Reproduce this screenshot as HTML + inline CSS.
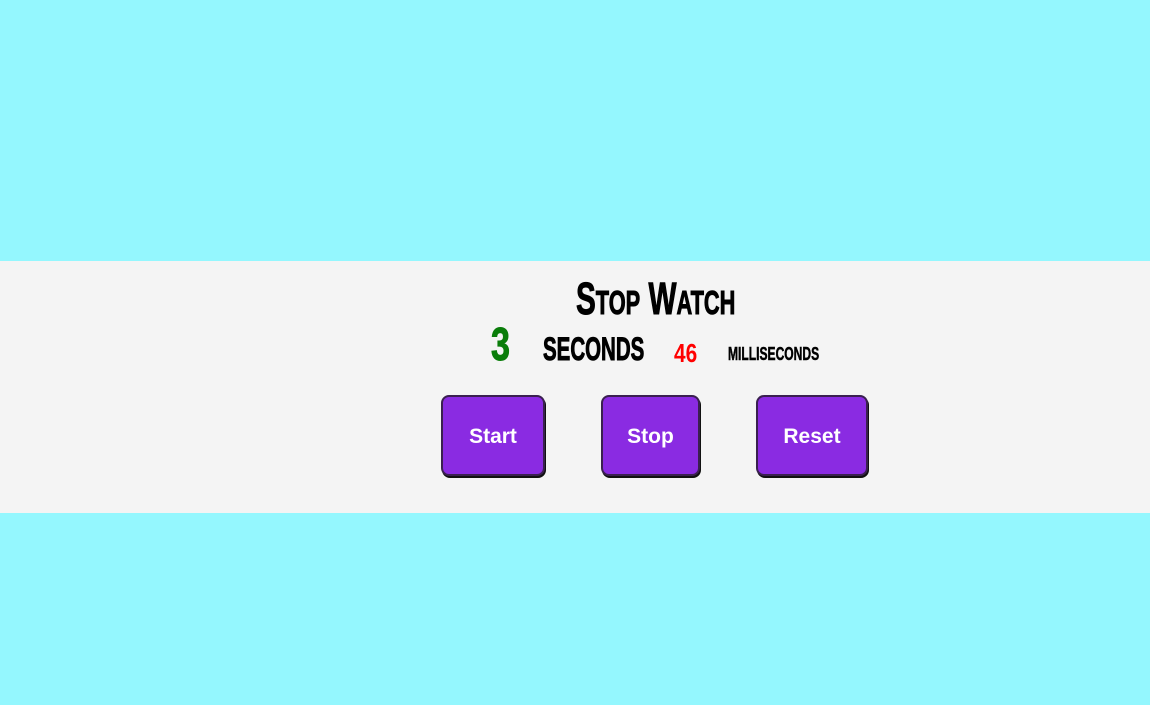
<!DOCTYPE html>
<html><head><style>
body{margin:0;width:1150px;height:705px;background:#94f7fe;position:relative;overflow:hidden;font-family:"Liberation Sans Narrow","Liberation Sans",sans-serif;font-weight:bold}
.band{position:absolute;left:0;top:261px;width:1150px;height:252px;background:#f4f4f4}
.t{position:absolute;line-height:1;white-space:nowrap;transform-origin:0 0}
.b{position:absolute;top:395px;height:81px;box-sizing:border-box;padding-top:2px;background:#8a2be2;border:2px solid #3a2050;border-radius:8px;box-shadow:1px 2px 0 #111;color:#fff;font-family:"Liberation Sans",sans-serif;font-weight:bold;font-size:21px;display:flex;align-items:center;justify-content:center}
</style></head><body>
<div class="band"></div>
<div class="t" style="left:576px;top:276px;font-size:45px;transform:scaleX(.66);-webkit-text-stroke:1px #000">S<span style="font-size:33px">TOP</span> W<span style="font-size:33px">ATCH</span></div>
<div class="t" style="left:491px;top:321px;font-size:46px;color:#0a7d0a;transform:scaleX(.74);-webkit-text-stroke:1px #0a7d0a">3</div>
<div class="t" style="left:543px;top:333px;font-size:32px;transform:scaleX(.64);-webkit-text-stroke:1px #000">SECONDS</div>
<div class="t" style="left:674px;top:340px;font-size:26px;color:#f00;transform:scaleX(.8)">46</div>
<div class="t" style="left:728px;top:345px;font-size:18px;transform:scaleX(.67);-webkit-text-stroke:.5px #000">MILLISECONDS</div>
<div class="b" style="left:441px;width:104px">Start</div>
<div class="b" style="left:601px;width:99px">Stop</div>
<div class="b" style="left:756px;width:112px">Reset</div>
</body></html>
